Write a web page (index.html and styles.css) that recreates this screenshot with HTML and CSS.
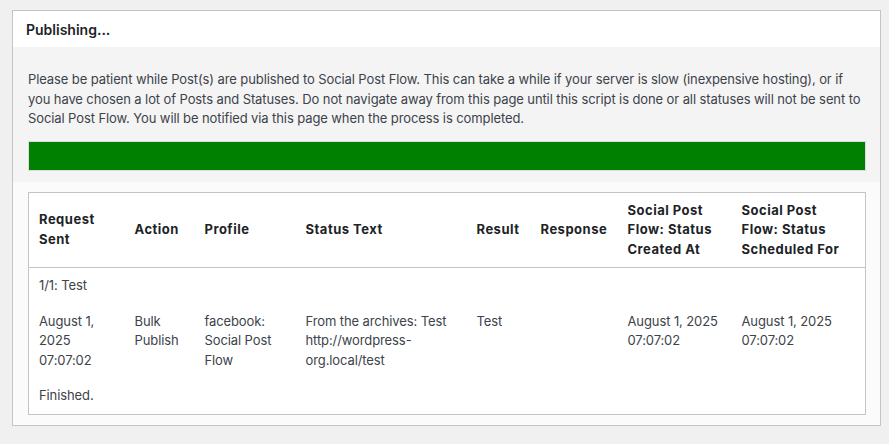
FILE: index.html
```html
<!DOCTYPE html>
<html>
<head>
<meta charset="utf-8">
<link rel="stylesheet" href="styles.css">
</head>
<body>
<div class="panel">
  <div class="panel-head"><h2 class="title">Publishing...</h2></div>
  <div class="panel-body">
    <p class="notice">Please be patient while Post(s) are published to Social Post Flow. This can take a while if your server is slow (inexpensive hosting), or if you have chosen a lot of Posts and Statuses. Do not navigate away from this page until this script is done or all statuses will not be sent to Social Post Flow. You will be notified via this page when the process is completed.</p>
    <div class="progress"><div class="progress-fill"></div></div>
  </div>
  <div class="panel-log">
    <table class="log">
      <colgroup>
        <col class="c1"><col class="c2"><col class="c3"><col class="c4"><col class="c5"><col class="c6"><col class="c7"><col class="c8">
      </colgroup>
      <thead>
        <tr>
          <th>Request Sent</th>
          <th>Action</th>
          <th>Profile</th>
          <th>Status Text</th>
          <th>Result</th>
          <th>Response</th>
          <th>Social Post Flow: Status Created At</th>
          <th>Social Post Flow: Status Scheduled For</th>
        </tr>
      </thead>
      <tbody>
        <tr><td colspan="8">1/1: Test</td></tr>
        <tr>
          <td>August 1, 2025 07:07:02</td>
          <td>Bulk Publish</td>
          <td>facebook: Social Post Flow</td>
          <td>From the archives: Test http://wordpress-org.local/test</td>
          <td>Test</td>
          <td></td>
          <td>August 1, 2025 07:07:02</td>
          <td>August 1, 2025 07:07:02</td>
        </tr>
        <tr><td colspan="8">Finished.</td></tr>
      </tbody>
    </table>
  </div>
</div>
</body>
</html>
```
FILE: styles.css
```css
html, body {
  margin: 0;
  padding: 0;
}
body {
  background: #f0f0f1;
  font-family: Inter, "Liberation Sans", sans-serif;
  font-size: 13px;
  letter-spacing: -0.1px;
  color: #3c434a;
  padding: 10px 8px 0 12px;
}
.panel {
  border: 1px solid #c3c4c7;
  background: #fff;
}
.panel-head {
  height: 36px;
  display: flex;
  align-items: center;
  padding: 0 13px;
  background: #fff;
}
.title {
  margin: 0;
  font-size: 14px;
  font-weight: 600;
  letter-spacing: 0;
  color: #1d2327;
}
.panel-body {
  background: #f4f4f4;
  padding: 23px 14px 11px 15px;
}
.notice {
  margin: 0 0 12px;
  line-height: 19.5px;
}
.progress {
  height: 28px;
  border: 1px solid #dcdcde;
  background: #fff;
}
.progress-fill {
  height: 100%;
  width: 100%;
  background: #008000;
}
.panel-log {
  background: #fbfbfb;
  padding: 10px 14px 10px 15px;
}
.log {
  width: 100%;
  table-layout: fixed;
  border-collapse: collapse;
  border: 1px solid #c3c4c7;
  background: #fff;
}
.c1 { width: 96px; }
.c2 { width: 70px; }
.c3 { width: 101px; }
.c4 { width: 171px; }
.c5 { width: 64px; }
.c6 { width: 87px; }
.c7 { width: 114px; }
.c8 { width: auto; }
.log th, .log td {
  padding: 8px 10px;
  line-height: 19.5px;
  text-align: left;
  vertical-align: top;
}
.log th {
  font-weight: 700;
  letter-spacing: 0.5px;
  color: #1d2327;
  vertical-align: middle;
  border-bottom: 1px solid #c3c4c7;
}
```
